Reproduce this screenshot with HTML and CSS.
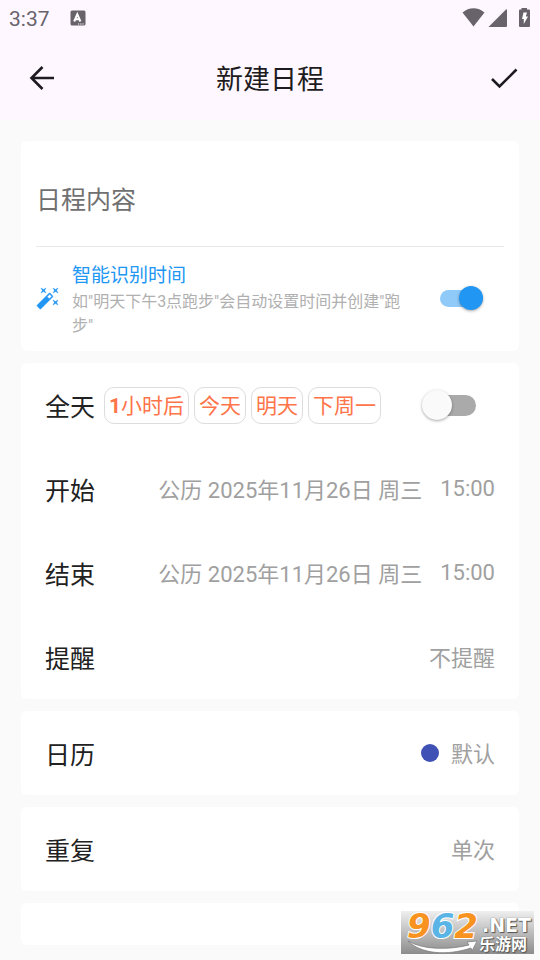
FILE: index.html
```html
<!DOCTYPE html>
<html lang="zh-CN">
<head>
<meta charset="utf-8">
<meta name="viewport" content="width=device-width, initial-scale=1">
<title>新建日程</title>
<link rel="stylesheet" href="styles.css">
</head>
<body>
<header class="top">
  <div class="status">
    <span class="clock">3:37</span>
    <svg class="ime" width="16" height="16" viewBox="0 0 16 16" aria-hidden="true">
      <rect x="0.5" y="0.5" width="15" height="15" rx="1.5" fill="#68636b"/>
      <path d="M4.2 11.500 7.300 4.200 10.400 11.500M5.300 9.200H9.300" fill="none" stroke="#fff" stroke-width="2"/>
      <path d="M8 14H9.200M10.200 14H11.400M12.400 14H13.600" stroke="#fff" stroke-width="1.200"/>
    </svg>
    <svg class="signals" width="68" height="22" viewBox="0 0 68 22" aria-hidden="true">
      <g fill="#68636b">
        <path d="M0.5 5.500C7-0.300 16-0.300 22.500 5.500L11.500 19.500Z"/>
        <path d="M26.500 20 44 2.500Q45 2 45 3V19Q45 20 44 20Z"/>
        <path d="M58 2.500H59.500V1H65V2.500H67Q68 2.500 68 3.500V19Q68 20 67 20H58Q57 20 57 19V3.500Q57 2.500 58 2.500Z"/>
      </g>
      <path d="M61.500 5.500H65L63.800 9.500H66L61.800 17V12H60Z" fill="#fff"/>
    </svg>
  </div>
  <div class="appbar">
    <button class="icon-btn" type="button" aria-label="返回">
      <svg width="26" height="26" viewBox="0 0 26 26"><path d="M25 13H2.500M13.500 2 2.500 13 13.500 24" fill="none" stroke="#1d1b20" stroke-width="2.600"/></svg>
    </button>
    <h1>新建日程</h1>
    <button class="icon-btn save" type="button" aria-label="保存">
      <svg width="28" height="26" viewBox="0 0 28 26"><path d="M2 14 9.500 21.500 26.500 4.500" fill="none" stroke="#1d1b20" stroke-width="2.600"/></svg>
    </button>
  </div>
</header>
<main>
  <section class="card content">
    <input class="subject" type="text" placeholder="日程内容" aria-label="日程内容">
    <div class="smart">
      <svg class="wand" width="24" height="24" viewBox="0 0 24 24" aria-hidden="true">
        <path fill="#2196f3" stroke="#2196f3" stroke-width=".4" fill-rule="evenodd" d="M7.500 5.600 10 7 8.600 4.500 10 2 7.500 3.400 5 2 6.400 4.500 5 7ZM19.500 15.400 17 14 18.400 16.500 17 19 19.500 17.600 22 19 20.600 16.500 22 14ZM22 2 19.500 3.400 17 2 18.400 4.500 17 7 19.500 5.600 22 7 20.600 4.500ZM14.370 7.290Q13.660 6.700 12.960 7.290L1.290 18.960Q.7 19.660 1.290 20.370L3.630 22.710Q4.340 23.300 5.040 22.710L16.700 11.050Q17.300 10.350 16.700 9.640ZM13.340 12.780 11.220 10.660 13.660 8.220 15.780 10.340Z"/>
      </svg>
      <label class="smart-text" for="smart">
        <span class="smart-title">智能识别时间</span>
        <span class="smart-hint">如"明天下午3点跑步"会自动设置时间并创建"跑步"</span>
      </label>
      <input class="switch small" id="smart" type="checkbox" role="switch" checked>
    </div>
  </section>
  <section class="card">
    <div class="row">
      <label class="name" for="allday">全天</label>
      <div class="chips">
        <button type="button"><b>1</b>小时后</button>
        <button type="button">今天</button>
        <button type="button">明天</button>
        <button type="button">下周一</button>
      </div>
      <input class="switch" id="allday" type="checkbox" role="switch">
    </div>
    <div class="row">
      <span class="name">开始</span>
      <button class="value" type="button">公历 2025年11月26日 周三</button>
      <button class="value time" type="button">15:00</button>
    </div>
    <div class="row">
      <span class="name">结束</span>
      <button class="value" type="button">公历 2025年11月26日 周三</button>
      <button class="value time" type="button">15:00</button>
    </div>
    <div class="row">
      <span class="name">提醒</span>
      <button class="value" type="button">不提醒</button>
    </div>
  </section>
  <section class="card">
    <div class="row">
      <span class="name">日历</span>
      <span class="dot"></span>
      <button class="value" type="button">默认</button>
    </div>
  </section>
  <section class="card">
    <div class="row">
      <span class="name">重复</span>
      <button class="value" type="button">单次</button>
    </div>
  </section>
  <section class="card next"></section>
</main>
<div class="mark">
  <svg class="swoosh" width="133" height="43" viewBox="0 0 133 43" aria-hidden="true">
    <path d="M7 30C22 39 48 39 68 34L66 31 76 30 71 40 70 37C46 45 20 43 7 30Z" fill="#fff" stroke="#777" stroke-width=".7"/>
  </svg>
  <span class="digits"><b>9</b><b class="blue">6</b><b>2</b></span>
  <span class="side"><span class="net">.NET</span><span class="cn">乐游网</span></span>
</div>
</body>
</html>
```
FILE: styles.css
```css
* { box-sizing: border-box; }
body {
  margin: 0;
  min-height: 100vh;
  display: flex;
  flex-direction: column;
  background: #fafafa;
  color: #212121;
  font-family: Roboto, "Noto Sans CJK SC", sans-serif;
  font-weight: 400;
  position: relative;
}
button, input { font: inherit; color: inherit; margin: 0; }
button { border: 0; padding: 0; background: none; }
.top { background: #fef7ff; }
.status {
  display: flex;
  align-items: center;
  height: 36px;
  padding: 0 10px 0 9px;
  color: #68636b;
}
.clock { font-size: 21px; line-height: 24px; padding-top: 2px; }
.ime { margin-left: 20px; }
.signals { margin-left: auto; }
.appbar {
  display: flex;
  align-items: center;
  justify-content: space-between;
  height: 84px;
  padding: 0 12px;
}
.icon-btn {
  width: 60px;
  height: 48px;
  display: flex;
  align-items: center;
  justify-content: center;
}
.icon-btn.save { justify-content: flex-end; padding-right: 10px; }
.appbar h1 {
  margin: 0;
  padding-top: 4px;
  font-size: 27px;
  line-height: 36px;
  font-weight: 400;
  color: #1d1b20;
}
main {
  flex: 1;
  display: flex;
  flex-direction: column;
  gap: 12px;
  padding: 21px 21px 15px;
}
.card { background: #fff; border-radius: 6px; }
.content { padding: 0 15px; }
.subject {
  display: block;
  width: 100%;
  height: 106px;
  padding: 14px 0 0;
  border: 0;
  border-bottom: 1px solid #e8e8e8;
  background: none;
  font-size: 25px;
  outline: 0;
}
.subject::placeholder { color: #707070; opacity: 1; }
.smart {
  display: flex;
  align-items: center;
  height: 104px;
  padding: 0 21px 2px 0;
}
.smart-text {
  flex: 1;
  display: flex;
  flex-direction: column;
  margin: 0 24px 0 12px;
  padding-top: 4px;
}
.smart-title { font-size: 19px; line-height: 28px; color: #2196f3; }
.smart-hint { font-size: 16px; line-height: 24px; color: #b0b0b0; }
.row {
  display: flex;
  align-items: center;
  height: 84px;
  padding: 0 24px;
}
.name { font-size: 25px; line-height: 36px; padding-top: 6px; margin-right: auto; }
.chips { display: flex; gap: 5px; margin: 0 auto 0 9px; }
.row .name:has(+ .chips) { margin-right: 0; }
.chips button {
  height: 37px;
  padding: 2px 4px 0;
  border: 1px solid #ddd;
  border-radius: 10px;
  font-size: 21px;
  line-height: 33px;
  color: #ff7448;
  white-space: nowrap;
}
.value {
  padding-top: 4px;
  font-size: 22px;
  line-height: 32px;
  color: #a0a0a0;
  white-space: nowrap;
}
.time { margin-left: 18px; padding-top: 0; }
.dot {
  width: 18px;
  height: 18px;
  margin-right: 12px;
  border-radius: 50%;
  background: #3f51b5;
}
.switch {
  appearance: none;
  flex: none;
  position: relative;
  width: 52px;
  height: 21px;
  margin-right: 19px;
  border-radius: 11px;
  background: #aaa;
}
.switch::before {
  content: "";
  position: absolute;
  left: -2px;
  top: -5px;
  width: 30px;
  height: 30px;
  border-radius: 50%;
  background: #fafafa;
  box-shadow: 0 1px 3px rgba(0, 0, 0, .35);
}
.switch.small {
  width: 43px;
  height: 17px;
  margin-right: 0;
  background: #90caf9;
}
.switch.small::before {
  left: 19px;
  top: -4px;
  width: 24px;
  height: 24px;
  background: #2196f3;
}
.next { flex: 1; min-height: 42px; }
.mark {
  position: absolute;
  right: 6px;
  bottom: 6px;
  width: 133px;
  height: 43px;
  display: flex;
  padding: 0 3px 0 6px;
  background: linear-gradient(#efefef, #8c8c8c);
}
.swoosh { position: absolute; left: 0; top: 0; }
.digits {
  font: italic 700 34px/31px "DejaVu Sans", sans-serif;
  color: #f7931e;
  -webkit-text-stroke: 2px #fff;
  paint-order: stroke;
  white-space: nowrap;
}
.digits .blue { color: #5ab4e5; }
.side {
  display: flex;
  flex-direction: column;
  margin-left: auto;
  align-items: flex-end;
  color: #fff;
  text-shadow: 0 0 1px #444, 1px 1px 1px #555;
}
.net { font: 700 19px/24px "DejaVu Sans", sans-serif; margin-top: 2px; }
.cn { font-size: 16px; line-height: 16px; font-weight: 700; padding-right: 4px; }
```
